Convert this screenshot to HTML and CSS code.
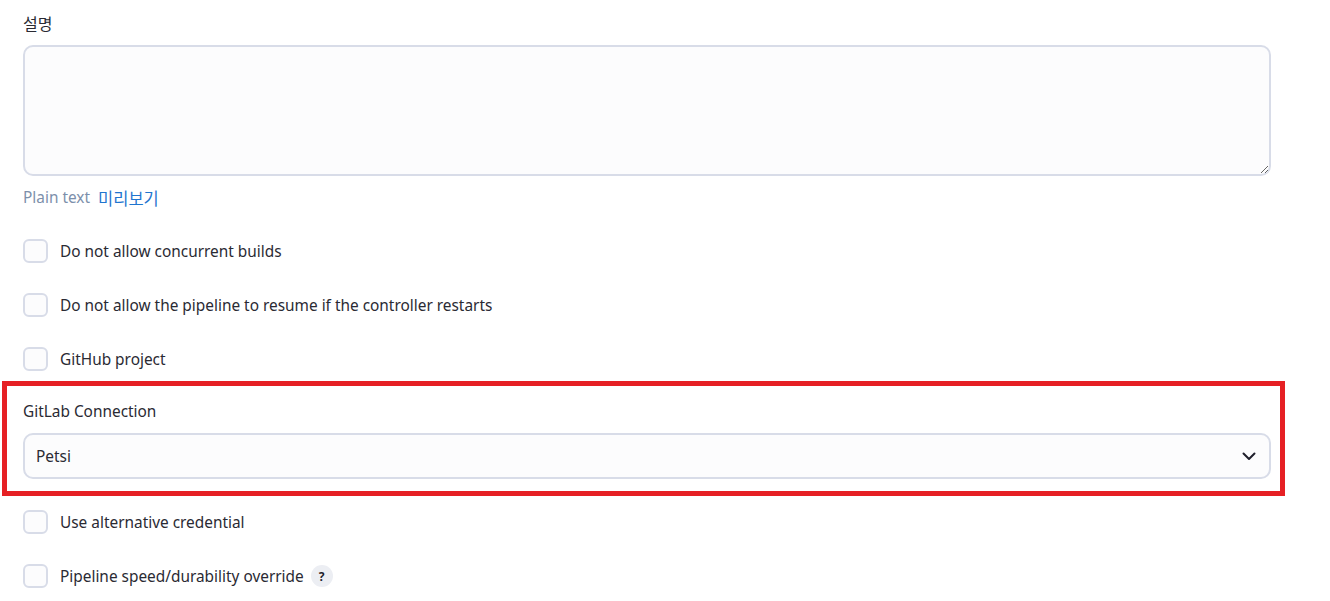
FILE: index.html
```html
<!DOCTYPE html>
<html lang="ko">
<head>
<meta charset="utf-8">
<title>Config</title>
<link rel="stylesheet" href="styles.css">
</head>
<body>
<div class="page">
  <div class="field-label ko">설명</div>
  <textarea class="textarea"></textarea>
  <div class="format-row">
    <span class="format-name">Plain text</span>
    <a class="preview-link" href="#">미리보기</a>
  </div>

  <div class="check-list first">
    <label class="check-row"><span class="box"></span><span class="check-text">Do not allow concurrent builds</span></label>
    <label class="check-row"><span class="box"></span><span class="check-text">Do not allow the pipeline to resume if the controller restarts</span></label>
    <label class="check-row"><span class="box"></span><span class="check-text">GitHub project</span></label>
  </div>

  <div class="highlight">
    <div class="field-label">GitLab Connection</div>
    <div class="select">
      <span class="select-value">Petsi</span>
      <svg class="chevron" width="14" height="9" viewBox="0 0 14 9"><path d="M1.5 1.5 L7 7 L12.5 1.5" fill="none" stroke="#1f1f2b" stroke-width="2" stroke-linecap="round" stroke-linejoin="round"/></svg>
    </div>
  </div>

  <div class="check-list last">
    <label class="check-row"><span class="box"></span><span class="check-text">Use alternative credential</span></label>
    <label class="check-row"><span class="box"></span><span class="check-text">Pipeline speed/durability override</span><span class="help">?</span></label>
  </div>
</div>
</body>
</html>
```
FILE: styles.css
```css
* { box-sizing: border-box; }
html, body { margin: 0; padding: 0; background: #ffffff; }
body {
  font-family: "Noto Sans", "Noto Sans CJK KR", sans-serif;
  font-size: 15.4px;
  color: #2a2a33;
}
.page {
  padding: 12px 59px 0 23px;
}
.field-label {
  height: 22px;
  line-height: 22px;
  font-size: 15.4px;
  color: #2a2a33;
}
.field-label.ko {
  font-family: "Noto Sans CJK KR", sans-serif;
  font-size: 16px;
}
.textarea {
  display: block;
  width: 100%;
  height: 131px;
  margin-top: 11px;
  border: 2px solid #d8dce8;
  border-radius: 10px;
  background: #fcfcfd;
  resize: vertical;
  font-family: inherit;
}
.format-row {
  display: flex;
  align-items: center;
  gap: 8px;
  height: 22px;
  line-height: 22px;
  margin-top: 11px;
}
.format-name { color: #7c8fab; font-size: 15.4px; }
.preview-link {
  color: #1f75cf;
  text-decoration: none;
  font-family: "Noto Sans CJK KR", sans-serif;
  font-size: 16.5px;
}
.check-list {
  display: flex;
  flex-direction: column;
  gap: 30px;
}
.check-list.first { margin-top: 30px; }
.check-list.last { margin-top: 14px; }
.check-row {
  display: flex;
  align-items: center;
  height: 24px;
}
.box {
  width: 25px;
  height: 24px;
  border: 2px solid #d8dce8;
  border-radius: 6px;
  background: #fcfcfd;
  flex: none;
}
.check-text {
  margin-left: 12px;
  color: #2a2a33;
}
.help {
  display: inline-flex;
  align-items: center;
  justify-content: center;
  width: 22px;
  height: 22px;
  margin-left: 7px;
  border-radius: 50%;
  background: #eceef3;
  color: #1f1f2b;
  font-size: 12px;
  font-weight: 700;
}
.highlight {
  margin: 10px -14px 0 -21px;
  padding: 15px 9px 12px 16px;
  border: 5px solid #e62024;
}
.select {
  display: flex;
  align-items: center;
  justify-content: space-between;
  height: 46px;
  margin-top: 10px;
  padding: 0 13px 0 11px;
  border: 2px solid #d8dce8;
  border-radius: 10px;
  background: #fcfcfd;
}
.select-value { color: #2a2a33; }
.chevron { display: block; }
```
